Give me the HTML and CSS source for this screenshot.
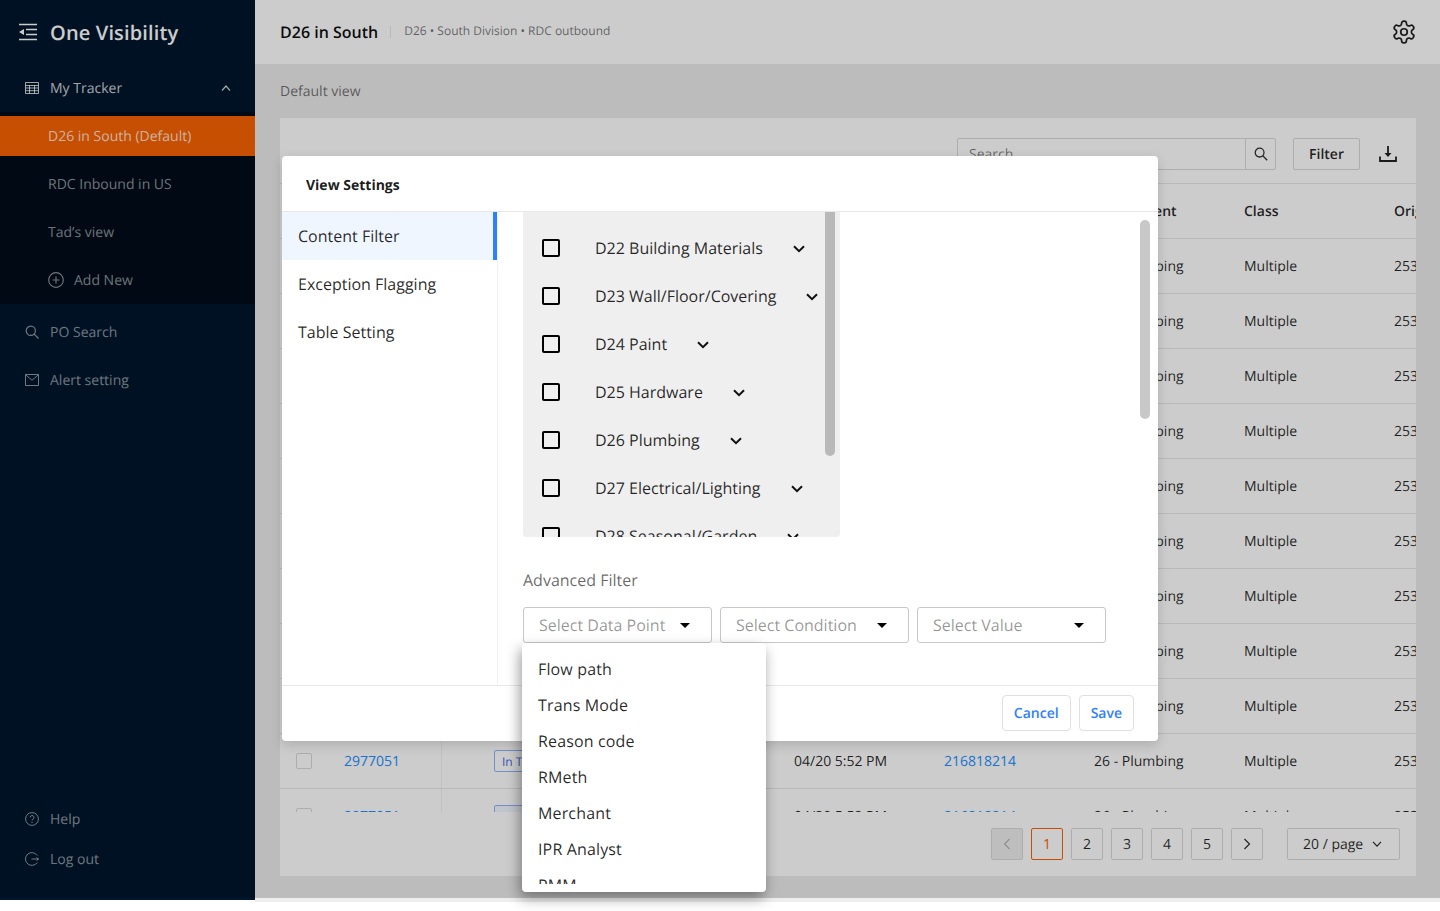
FILE: index.html
```html
<!DOCTYPE html>
<html lang="en">
<head>
<meta charset="utf-8">
<title>One Visibility</title>
<link rel="stylesheet" href="styles.css">
</head>
<body>
<div class="app">
  <aside class="sidebar">
    <div class="brand">
      <svg class="brand-icon" viewBox="0 0 20 18"><path d="M1 1.500h18M8 6.500h11M8 11.500h11M1 16.500h18" fill="none" stroke="currentColor" stroke-width="1.600"/><path d="M6 6v6L1 9z" fill="currentColor"/></svg>
      <span class="brand-name">One Visibility</span>
    </div>
    <div class="nav-row nav-head">
      <svg class="nav-icon" viewBox="0 0 14 12"><path d="M.5.5h13v11H.5zM.5 3.500h13M.5 6h13M.5 8.700h13M4.500 3.500v8M9.500 3.500v8" fill="none" stroke="currentColor"/></svg>
      <span class="nav-label">My Tracker</span>
      <svg class="nav-chevron" viewBox="0 0 10 6"><path d="M1 5.500l4-4.500 4 4.500" fill="none" stroke="currentColor" stroke-width="1.200"/></svg>
    </div>
    <div class="subnav">
      <div class="sub-item sub-item-active">D26 in South (Default)</div>
      <div class="sub-item">RDC Inbound in US</div>
      <div class="sub-item">Tad’s view</div>
      <div class="sub-item">
        <svg class="add-icon" viewBox="0 0 14 14"><circle cx="7" cy="7" r="6.400" fill="none" stroke="currentColor"/><path d="M7 4v6M4 7h6" stroke="currentColor"/></svg>
        <span>Add New</span>
      </div>
    </div>
    <div class="nav-list">
      <div class="nav-row nav-dim">
        <svg class="nav-icon" viewBox="0 0 14 14"><circle cx="5.800" cy="5.800" r="4.600" fill="none" stroke="currentColor" stroke-width="1.200"/><path d="M9.200 9.200l4.300 4.300" stroke="currentColor" stroke-width="1.200"/></svg>
        <span class="nav-label">PO Search</span>
      </div>
      <div class="nav-row nav-dim">
        <svg class="nav-icon" viewBox="0 0 14 12"><path d="M.5.5h13v11H.5z" fill="none" stroke="currentColor"/><path d="M.8 1l6.200 5.200L13.200 1" fill="none" stroke="currentColor"/></svg>
        <span class="nav-label">Alert setting</span>
      </div>
    </div>
    <div class="nav-foot">
      <div class="foot-row">
        <svg class="nav-icon" viewBox="0 0 14 14"><circle cx="7" cy="7" r="6.400" fill="none" stroke="currentColor"/><path d="M5.200 5.400a1.900 1.900 0 1 1 2.800 1.700c-.7.4-1 .8-1 1.500" fill="none" stroke="currentColor"/><circle cx="7" cy="10.400" r=".7" fill="currentColor"/></svg>
        <span class="nav-label">Help</span>
      </div>
      <div class="foot-row">
        <svg class="nav-icon" viewBox="0 0 14 14"><path d="M12.300 3.600A6.400 6.400 0 1 0 12.300 10.400" fill="none" stroke="currentColor"/><path d="M6.500 7h7M11.500 5.500L13.500 7l-2 1.500" fill="none" stroke="currentColor"/></svg>
        <span class="nav-label">Log out</span>
      </div>
    </div>
  </aside>

  <main class="main">
    <header class="topbar">
      <h1 class="page-title">D26 in South</h1>
      <span class="title-sep"></span>
      <span class="page-sub">D26 • South Division • RDC outbound</span>
      <svg class="gear" viewBox="0 0 24 24"><path d="M12.220 2h-.44a2 2 0 0 0-2 2v.18a2 2 0 0 1-1 1.730l-.43.25a2 2 0 0 1-2 0l-.15-.08a2 2 0 0 0-2.730.73l-.22.38a2 2 0 0 0 .73 2.730l.15.1a2 2 0 0 1 1 1.720v.51a2 2 0 0 1-1 1.740l-.15.09a2 2 0 0 0-.73 2.730l.22.38a2 2 0 0 0 2.730.73l.15-.08a2 2 0 0 1 2 0l.43.25a2 2 0 0 1 1 1.730V20a2 2 0 0 0 2 2h.44a2 2 0 0 0 2-2v-.18a2 2 0 0 1 1-1.730l.43-.25a2 2 0 0 1 2 0l.15.08a2 2 0 0 0 2.730-.73l.22-.39a2 2 0 0 0-.73-2.730l-.15-.08a2 2 0 0 1-1-1.740v-.5a2 2 0 0 1 1-1.740l.15-.09a2 2 0 0 0 .73-2.730l-.22-.38a2 2 0 0 0-2.730-.73l-.15.08a2 2 0 0 1-2 0l-.43-.25a2 2 0 0 1-1-1.730V4a2 2 0 0 0-2-2z" fill="none" stroke="currentColor" stroke-width="1.600"/><circle cx="12" cy="12" r="3" fill="none" stroke="currentColor" stroke-width="1.600"/></svg>
    </header>
    <section class="content">
      <div class="view-name">Default view</div>
      <div class="panel">
        <div class="toolbar">
          <div class="search">
            <span class="search-input">Search</span>
            <span class="search-btn"><svg class="search-icon" viewBox="0 0 14 14"><circle cx="5.600" cy="5.600" r="4.400" fill="none" stroke="currentColor" stroke-width="1.300"/><path d="M8.800 8.800l4.400 4.400" stroke="currentColor" stroke-width="1.300"/></svg></span>
          </div>
          <span class="filter-btn">Filter</span>
          <svg class="download" viewBox="0 0 18 16"><path d="M9 0v9.500" stroke="currentColor" stroke-width="1.800"/><path d="M5.500 7h7L9 11z" fill="currentColor"/><path d="M1 10.500V15h16v-4.500" fill="none" stroke="currentColor" stroke-width="1.800"/></svg>
        </div>
        <div class="table">
          <div class="row row-head">
            <span class="cell"></span><span class="cell cell-po">PO</span><span class="cell cell-status">Status</span><span class="cell">Last Update</span><span class="cell">Shipment</span><span class="cell">Department</span><span class="cell">Class</span><span class="cell">Origin</span>
          </div>
          <div class="row"><span class="cell"><i class="check"></i></span><span class="cell cell-po link">2977051</span><span class="cell cell-status"><b class="badge">In Transit</b></span><span class="cell">04/20 5:52 PM</span><span class="cell link">216818214</span><span class="cell">26 - Plumbing</span><span class="cell">Multiple</span><span class="cell">2531</span></div>
          <div class="row"><span class="cell"><i class="check"></i></span><span class="cell cell-po link">2977051</span><span class="cell cell-status"><b class="badge">In Transit</b></span><span class="cell">04/20 5:52 PM</span><span class="cell link">216818214</span><span class="cell">26 - Plumbing</span><span class="cell">Multiple</span><span class="cell">2531</span></div>
          <div class="row"><span class="cell"><i class="check"></i></span><span class="cell cell-po link">2977051</span><span class="cell cell-status"><b class="badge">In Transit</b></span><span class="cell">04/20 5:52 PM</span><span class="cell link">216818214</span><span class="cell">26 - Plumbing</span><span class="cell">Multiple</span><span class="cell">2531</span></div>
          <div class="row"><span class="cell"><i class="check"></i></span><span class="cell cell-po link">2977051</span><span class="cell cell-status"><b class="badge">In Transit</b></span><span class="cell">04/20 5:52 PM</span><span class="cell link">216818214</span><span class="cell">26 - Plumbing</span><span class="cell">Multiple</span><span class="cell">2531</span></div>
          <div class="row"><span class="cell"><i class="check"></i></span><span class="cell cell-po link">2977051</span><span class="cell cell-status"><b class="badge">In Transit</b></span><span class="cell">04/20 5:52 PM</span><span class="cell link">216818214</span><span class="cell">26 - Plumbing</span><span class="cell">Multiple</span><span class="cell">2531</span></div>
          <div class="row"><span class="cell"><i class="check"></i></span><span class="cell cell-po link">2977051</span><span class="cell cell-status"><b class="badge">In Transit</b></span><span class="cell">04/20 5:52 PM</span><span class="cell link">216818214</span><span class="cell">26 - Plumbing</span><span class="cell">Multiple</span><span class="cell">2531</span></div>
          <div class="row"><span class="cell"><i class="check"></i></span><span class="cell cell-po link">2977051</span><span class="cell cell-status"><b class="badge">In Transit</b></span><span class="cell">04/20 5:52 PM</span><span class="cell link">216818214</span><span class="cell">26 - Plumbing</span><span class="cell">Multiple</span><span class="cell">2531</span></div>
          <div class="row"><span class="cell"><i class="check"></i></span><span class="cell cell-po link">2977051</span><span class="cell cell-status"><b class="badge">In Transit</b></span><span class="cell">04/20 5:52 PM</span><span class="cell link">216818214</span><span class="cell">26 - Plumbing</span><span class="cell">Multiple</span><span class="cell">2531</span></div>
          <div class="row"><span class="cell"><i class="check"></i></span><span class="cell cell-po link">2977051</span><span class="cell cell-status"><b class="badge">In Transit</b></span><span class="cell">04/20 5:52 PM</span><span class="cell link">216818214</span><span class="cell">26 - Plumbing</span><span class="cell">Multiple</span><span class="cell">2531</span></div>
          <div class="row"><span class="cell"><i class="check"></i></span><span class="cell cell-po link">2977051</span><span class="cell cell-status"><b class="badge">In Transit</b></span><span class="cell">04/20 5:52 PM</span><span class="cell link">216818214</span><span class="cell">26 - Plumbing</span><span class="cell">Multiple</span><span class="cell">2531</span></div>
          <div class="row"><span class="cell"><i class="check"></i></span><span class="cell cell-po link">2977051</span><span class="cell cell-status"><b class="badge badge-fill">In Transit</b></span><span class="cell">04/20 5:52 PM</span><span class="cell link">216818214</span><span class="cell">26 - Plumbing</span><span class="cell">Multiple</span><span class="cell">2531</span></div>
        </div>
        <div class="pager">
          <span class="page-btn page-disabled"><svg class="page-arrow" viewBox="0 0 8 12"><path d="M6.500 1L1.500 6l5 5" fill="none" stroke="currentColor" stroke-width="1.100"/></svg></span>
          <span class="page-btn page-active">1</span>
          <span class="page-btn">2</span>
          <span class="page-btn">3</span>
          <span class="page-btn">4</span>
          <span class="page-btn">5</span>
          <span class="page-btn"><svg class="page-arrow" viewBox="0 0 8 12"><path d="M1.500 1l5 5-5 5" fill="none" stroke="currentColor" stroke-width="1.100"/></svg></span>
          <span class="page-size">20 / page<svg class="size-chevron" viewBox="0 0 10 6"><path d="M1 .8l4 4.400 4-4.400" fill="none" stroke="currentColor" stroke-width="1.100"/></svg></span>
        </div>
      </div>
    </section>
  </main>

  <div class="mask"></div>

  <div class="modal">
    <div class="modal-title">View Settings</div>
    <div class="modal-body">
      <nav class="modal-nav">
        <div class="modal-tab modal-tab-active">Content Filter</div>
        <div class="modal-tab">Exception Flagging</div>
        <div class="modal-tab">Table Setting</div>
      </nav>
      <div class="modal-pane">
        <div class="dept-list">
          <div class="dept"><i class="dept-check"></i><span>D22 Building Materials</span><svg class="dept-chevron" viewBox="0 0 12 8"><path d="M1 1.200l5 5 5-5" fill="none" stroke="currentColor" stroke-width="2"/></svg></div>
          <div class="dept"><i class="dept-check"></i><span>D23 Wall/Floor/Covering</span><svg class="dept-chevron" viewBox="0 0 12 8"><path d="M1 1.200l5 5 5-5" fill="none" stroke="currentColor" stroke-width="2"/></svg></div>
          <div class="dept"><i class="dept-check"></i><span>D24 Paint</span><svg class="dept-chevron" viewBox="0 0 12 8"><path d="M1 1.200l5 5 5-5" fill="none" stroke="currentColor" stroke-width="2"/></svg></div>
          <div class="dept"><i class="dept-check"></i><span>D25 Hardware</span><svg class="dept-chevron" viewBox="0 0 12 8"><path d="M1 1.200l5 5 5-5" fill="none" stroke="currentColor" stroke-width="2"/></svg></div>
          <div class="dept"><i class="dept-check"></i><span>D26 Plumbing</span><svg class="dept-chevron" viewBox="0 0 12 8"><path d="M1 1.200l5 5 5-5" fill="none" stroke="currentColor" stroke-width="2"/></svg></div>
          <div class="dept"><i class="dept-check"></i><span>D27 Electrical/Lighting</span><svg class="dept-chevron" viewBox="0 0 12 8"><path d="M1 1.200l5 5 5-5" fill="none" stroke="currentColor" stroke-width="2"/></svg></div>
          <div class="dept"><i class="dept-check"></i><span>D28 Seasonal/Garden</span><svg class="dept-chevron" viewBox="0 0 12 8"><path d="M1 1.200l5 5 5-5" fill="none" stroke="currentColor" stroke-width="2"/></svg></div>
          <span class="list-thumb"></span>
        </div>
        <div class="adv-label">Advanced Filter</div>
        <div class="adv-row">
          <div class="select">Select Data Point<i class="caret"></i>
            <div class="dropdown">
              <div class="dropdown-list">
                <div class="dropdown-item">Flow path</div>
                <div class="dropdown-item">Trans Mode</div>
                <div class="dropdown-item">Reason code</div>
                <div class="dropdown-item">RMeth</div>
                <div class="dropdown-item">Merchant</div>
                <div class="dropdown-item">IPR Analyst</div>
                <div class="dropdown-item">PMM</div>
              </div>
            </div>
          </div>
          <div class="select">Select Condition<i class="caret"></i></div>
          <div class="select">Select Value<i class="caret"></i></div>
        </div>
        <span class="pane-thumb"></span>
      </div>
    </div>
    <div class="modal-foot">
      <span class="foot-btn">Cancel</span>
      <span class="foot-btn">Save</span>
    </div>
  </div>
</div>
</body>
</html>
```

FILE: styles.css
```css
* { box-sizing: border-box; }
html, body { margin: 0; padding: 0; background: #fff; }
body { height: 911px; overflow: hidden; font-family: "Open Sans", "Liberation Sans", sans-serif; font-size: 14px; color: rgba(0,0,0,.85); text-rendering: geometricPrecision; }
svg { display: block; flex: none; }

.app { position: relative; display: flex; width: 1440px; height: 902px; align-items: flex-start; }

/* sidebar */
.sidebar { display: flex; flex-direction: column; width: 255px; height: 900px; background: #00162c; color: rgba(255,255,255,.6); flex: none; }
.brand { display: flex; align-items: center; height: 64px; padding-left: 18px; color: #fff; }
.brand-icon { width: 20px; height: 18px; margin-right: 12px; }
.brand-name { font-size: 20px; font-weight: 600; letter-spacing: .15px; }
.nav-row { display: flex; align-items: center; height: 48px; padding-left: 25px; }
.nav-head { color: rgba(255,255,255,.8); }
.nav-dim { color: rgba(255,255,255,.55); }
.nav-icon { width: 14px; height: 14px; margin-right: 11px; }
.nav-chevron { width: 10px; height: 6px; margin-left: auto; margin-right: 24px; }
.subnav { padding: 4px 0; background: #000c19; }
.sub-item { display: flex; align-items: center; height: 40px; margin-bottom: 8px; padding-left: 48px; color: rgba(255,255,255,.55); }
.sub-item:last-child { margin-bottom: 0; }
.sub-item-active { background: #f96302; color: rgba(255,255,255,.8); }
.add-icon { width: 16px; height: 16px; margin-right: 10px; }
.nav-list { padding-top: 4px; }
.nav-foot { margin-top: auto; padding-bottom: 21px; color: rgba(255,255,255,.55); }
.foot-row { display: flex; align-items: center; height: 40px; padding-left: 25px; }

/* main */
.main { flex: none; width: 1185px; height: 902px; background: #eee; }
.topbar { display: flex; align-items: center; height: 64px; padding: 0 25px; background: #fff; }
.page-title { margin: 0; font-size: 16px; font-weight: 600; color: rgba(0,0,0,.95); }
.title-sep { width: 1px; height: 12px; margin: 0 13px 0 12px; background: #e8e8e8; }
.page-sub { font-size: 12px; color: rgba(0,0,0,.55); padding-bottom: 4px; }
.gear { width: 26px; height: 26px; margin-left: auto; margin-right: -2px; color: #222; }
.content { height: 834px; padding: 0 24px 0 25px; background: #ececec; }
.view-name { height: 54px; padding-top: 18px; line-height: 20px; color: rgba(0,0,0,.55); }
.panel { width: 1136px; height: 758px; background: #fff; overflow: hidden; }
.toolbar { display: flex; align-items: flex-start; height: 65px; padding: 20px 18px 0 677px; }
.search { display: flex; width: 319px; height: 32px; border: 1px solid #d9d9d9; border-radius: 2px; }
.search-input { flex: 1; padding-left: 11px; line-height: 32px; color: rgba(0,0,0,.5); }
.search-btn { display: flex; align-items: center; justify-content: center; width: 30px; border-left: 1px solid #d9d9d9; }
.search-icon { width: 14px; height: 14px; color: #333; }
.filter-btn { width: 67px; height: 32px; margin-left: 17px; border: 1px solid #d9d9d9; border-radius: 2px; text-align: center; line-height: 32px; font-weight: 600; }
.download { width: 18px; height: 16px; margin: 8px 0 0 19px; color: #222; }
.table { height: 629px; overflow: hidden; border-top: 1px solid #e8e8e8; }
.row { display: grid; grid-template-columns: 50px 112px 338px 150px 150px 150px 150px 150px; height: 55px; border-bottom: 1px solid #e8e8e8; align-items: stretch; }
.row-head { font-weight: 600; }
.cell { display: flex; align-items: center; padding-left: 14px; white-space: nowrap; }
.cell-po { border-right: 1px solid #f0f0f0; }
.cell-status { padding-left: 52px; }
.link { color: #2190ff; }
.check { display: block; width: 16px; height: 16px; margin-left: 2px; border: 1px solid #d9d9d9; border-radius: 2px; }
.badge { display: flex; align-items: center; width: 100px; height: 22px; padding-left: 7px; border: 1px solid #91b3ff; border-radius: 2px; font-size: 12px; font-weight: 400; color: #4a68e0; }
.badge-fill { background: #f0f5ff; }
.pager { display: flex; align-items: center; justify-content: flex-end; gap: 8px; height: 32px; margin-top: 16px; padding-right: 16px; }
.page-btn { display: flex; align-items: center; justify-content: center; width: 32px; height: 32px; border: 1px solid #d9d9d9; border-radius: 2px; }
.page-active { border-color: #f96302; color: #f96302; }
.page-disabled { background: #eee; color: rgba(0,0,0,.25); }
.page-arrow { width: 8px; height: 12px; }
.page-size { display: flex; align-items: center; width: 113px; height: 32px; margin-left: 16px; padding-left: 15px; border: 1px solid #d9d9d9; border-radius: 2px; }
.size-chevron { width: 10px; height: 6px; margin-left: 9px; }

/* overlay */
.mask { position: absolute; left: 0; top: 0; width: 1440px; height: 898px; background: rgba(0,0,0,.2); }
.modal { position: absolute; left: 282px; top: 156px; display: flex; flex-direction: column; width: 876px; height: 585px; background: #fff; border-radius: 4px; box-shadow: 0 4px 12px rgba(0,0,0,.15); }
.modal-title { height: 56px; padding: 20px 24px 0; border-bottom: 1px solid #e8e8e8; font-weight: 700; line-height: 19px; color: rgba(0,0,0,.9); }
.modal-body { display: flex; flex: 1; min-height: 0; }
.modal-nav { width: 216px; border-right: 1px solid #f0f0f0; flex: none; }
.modal-tab { height: 48px; padding-left: 16px; font-size: 16px; line-height: 48px; }
.modal-tab-active { width: 215px; background: #f0f6ff; border-right: 4px solid #2f80ff; }
.modal-pane { position: relative; flex: 1; padding-left: 25px; }
.dept-list { position: relative; width: 317px; height: 325px; padding-top: 12px; overflow: hidden; background: #efefef; border-radius: 0 0 4px 4px; }
.dept { display: flex; align-items: center; height: 48px; padding-left: 19px; font-size: 16px; white-space: nowrap; }
.dept-check { display: block; width: 18px; height: 18px; margin-right: 35px; border: 2px solid #000; border-radius: 2px; flex: none; }
.dept-chevron { width: 12px; height: 8px; margin-left: 30px; margin-top: 2px; color: #111; }
.list-thumb { position: absolute; left: 302px; top: 0; width: 10px; height: 244px; background: #b9b9b9; border-radius: 0 0 5px 5px; }
.adv-label { margin-top: 32px; font-size: 16px; line-height: 22px; color: rgba(0,0,0,.6); }
.adv-row { display: flex; gap: 8px; margin-top: 16px; }
.select { position: relative; display: flex; align-items: center; justify-content: space-between; width: 189px; height: 36px; padding: 0 20px 0 15px; border: 1px solid #c8c8c8; border-radius: 3px; font-size: 16px; color: rgba(0,0,0,.42); white-space: nowrap; }
.caret { display: block; width: 0; height: 0; border-left: 5px solid transparent; border-right: 5px solid transparent; border-top: 5px solid #000; margin-right: 1px; }
.dropdown { position: absolute; left: -2px; top: 35px; width: 244px; height: 249px; padding: 8px 0; background: #fff; border-radius: 4px; box-shadow: -2px 6px 14px rgba(0,0,0,.4); z-index: 2; }
.dropdown-list { height: 233px; overflow: hidden; }
.dropdown-item { height: 36px; padding-left: 16px; font-size: 16px; line-height: 36px; letter-spacing: .15px; color: rgba(0,0,0,.85); }
.pane-thumb { position: absolute; left: 642px; top: 8px; width: 10px; height: 199px; background: #c8c8c8; border-radius: 5px; }
.modal-foot { display: flex; justify-content: flex-end; gap: 8px; height: 56px; padding: 9px 24px 0 0; border-top: 1px solid #e8e8e8; }
.foot-btn { height: 36px; padding: 0 11px; border: 1px solid #e0e0e0; border-radius: 4px; font-weight: 600; line-height: 36px; color: #2f80ff; }
```
